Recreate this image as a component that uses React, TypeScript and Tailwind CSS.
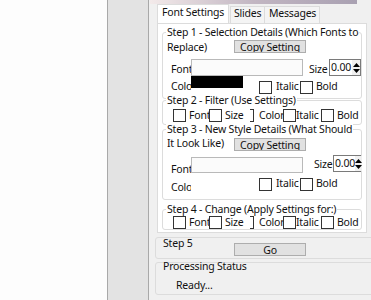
import React from "react";

const Check = () => (
  <span className="block h-[13px] w-[13px] shrink-0 border border-[#333333] bg-white" />
);

const Btn = ({ text, className = "" }: { text: string; className?: string }) => (
  <div
    className={`flex h-[13px] w-[72px] shrink-0 justify-center overflow-hidden border border-[#adadad] bg-[#e1e1e1] leading-[12px] ${className}`}
  >
    {text}
  </div>
);

const Spinner = ({ className = "" }: { className?: string }) => (
  <div className={`flex h-[17px] shrink-0 border border-[#7a7a7a] bg-white ${className}`}>
    <span className="flex-1 pl-[1px] leading-[15px]">0.00</span>
    <span className="flex w-[8px] flex-col items-center justify-center gap-[2px] bg-[#f0f0f0]">
      <svg width="7" height="4" viewBox="0 0 7 4">
        <path d="M0 4L3.5 0L7 4Z" fill="#000" />
      </svg>
      <svg width="7" height="4" viewBox="0 0 7 4">
        <path d="M0 0L3.5 4L7 0Z" fill="#000" />
      </svg>
    </span>
  </div>
);

const Title = ({ children }: { children: React.ReactNode }) => (
  <div className="-mt-[7px] ml-[3px] w-fit whitespace-nowrap bg-white px-[1px] leading-[13px]">
    {children}
  </div>
);

const Lbl = ({ text, className = "" }: { text: string; className?: string }) => (
  <span className={`block shrink-0 overflow-hidden whitespace-nowrap leading-[13px] ${className}`}>
    {text}
  </span>
);

const FilterRow = ({ className = "" }: { className?: string }) => (
  <div className={`flex h-[13px] items-start pl-[10px] ${className}`}>
    <Check />
    <Lbl text="Font" className="w-[23px] pl-[3px]" />
    <Check />
    <Lbl text="Size" className="w-[28px] pl-[3px]" />
    <span className="block h-[13px] w-[4px] shrink-0 border border-l-0 border-[#333333]" />
    <Lbl text="Color" className="w-[29px] pl-[5px]" />
    <Check />
    <Lbl text="Italic" className="w-[25px]" />
    <Check />
    <Lbl text="Bold" className="pl-[3px]" />
  </div>
);

export default function App() {
  return (
    <div className="flex h-[300px] w-[371px] overflow-hidden bg-[#f0f0f0] font-['Noto_Sans',sans-serif] text-[10.5px] tracking-[-0.2px] text-[#111]">
      <div className="w-[107px] shrink-0 bg-[#fdfdfd]" />
      <div className="w-[42px] shrink-0 border-x border-[#a9a9a9] bg-[#e3e3e3]" />

      <div className="flex w-[222px] shrink-0 flex-col">
        <div className="ml-[1px] h-[4px] w-[207px] bg-gradient-to-r from-[#f3eaea] via-[#c2b6c2] to-[#a9a1b2]" />

        {/* tabs */}
        <div className="ml-[8px] flex h-[19px] items-end">
          <div className="h-[19px] w-[72px] border border-b-0 border-[#dcdcdc] bg-white pl-[4px] pt-[1px] leading-[13px]">
            Font Settings
          </div>
          <div className="ml-[1px] h-[17px] w-[35px] border border-b-0 border-[#dcdcdc] bg-[#f4f4f4] pl-[3px] leading-[13px]">
            Slides
          </div>
          <div className="h-[17px] w-[55px] border border-b-0 border-l-0 border-[#dcdcdc] bg-[#f4f4f4] pl-[4px] leading-[13px]">
            Messages
          </div>
        </div>

        {/* tab page */}
        <div className="ml-[8px] flex h-[210px] w-[210px] flex-col overflow-hidden border border-[#dcdcdc] bg-white px-[4px]">
          {/* step 1 */}
          <div className="mt-[8px] rounded-[3px] border border-[#dcdcdc] pb-[4px]">
            <Title>Step 1 - Selection Details (Which Fonts to</Title>
            <div className="flex h-[14px] items-start">
              <Lbl text="Replace)" className="ml-[4px] w-[67px] pt-[2px]" />
              <Btn text="Copy Setting" className="mt-[1px]" />
            </div>
            <div className="mt-[6px] flex h-[17px] items-start">
              <Lbl text="Font" className="ml-[8px] mt-[4px] w-[20px]" />
              <div className="h-[17px] w-[112px] shrink-0 border border-[#b9b9b9] bg-[#fbfbfb]" />
              <Lbl text="Size" className="ml-[6px] mt-[4px] w-[20px]" />
              <Spinner className="w-[32px]" />
            </div>
            <div className="flex h-[18px] items-start">
              <Lbl text="Color" className="ml-[8px] mt-[4px] w-[20px]" />
              <div className="h-[12px] w-[52px] shrink-0 bg-black" />
              <span className="ml-[16px] mt-[5px]">
                <Check />
              </span>
              <Lbl text="Italic" className="mt-[4px] w-[28px] pl-[4px]" />
              <span className="mt-[5px]">
                <Check />
              </span>
              <Lbl text="Bold" className="mt-[4px] pl-[3px]" />
            </div>
          </div>

          {/* step 2 */}
          <div className="mt-[1px] rounded-[3px] border border-[#dcdcdc] pb-[2px]">
            <Title>Step 2 - Filter (Use Settings)</Title>
            <FilterRow className="mt-[2px]" />
          </div>

          {/* step 3 */}
          <div className="mt-[4px] rounded-[3px] border border-[#dcdcdc] pb-[8px]">
            <Title>Step 3 - New Style Details (What Should</Title>
            <div className="flex h-[15px] items-start">
              <Lbl text="It Look Like)" className="ml-[4px] w-[67px] pt-[1px]" />
              <Btn text="Copy Setting" className="mt-[2px]" />
            </div>
            <div className="mt-[4px] flex h-[18px] items-start">
              <Lbl text="Font" className="ml-[8px] mt-[8px] w-[20px]" />
              <div className="mt-[2px] h-[16px] w-[112px] shrink-0 border border-[#b9b9b9] bg-[#fbfbfb]" />
              <Lbl text="Size" className="ml-[11px] mt-[3px] w-[19px]" />
              <Spinner className="w-[28px]" />
            </div>
            <div className="flex h-[18px] items-start">
              <Lbl text="Color" className="ml-[8px] mt-[8px] w-[20px]" />
              <span className="ml-[68px] mt-[5px]">
                <Check />
              </span>
              <Lbl text="Italic" className="mt-[4px] w-[28px] pl-[4px]" />
              <span className="mt-[5px]">
                <Check />
              </span>
              <Lbl text="Bold" className="mt-[4px] pl-[3px]" />
            </div>
          </div>

          {/* step 4 */}
          <div className="mt-[9px] rounded-[3px] border border-[#dcdcdc]">
            <Title>Step 4 - Change (Apply Settings for:)</Title>
            <FilterRow />
          </div>
        </div>

        {/* step 5 */}
        <div className="ml-[6px] mt-[4px] flex h-[22px] w-[230px] shrink-0 items-start rounded-[3px] border border-[#dcdcdc]">
          <Lbl text="Step 5" className="-mt-[1px] ml-[7px] w-[71px]" />
          <Btn text="Go" className="mt-[5px] leading-[13px]" />
        </div>

        {/* processing status */}
        <div className="ml-[6px] mt-[3px] h-[33px] w-[230px] shrink-0 rounded-[3px] border border-[#dcdcdc]">
          <Lbl text="Processing Status" className="-mt-[3px] ml-[7px]" />
          <Lbl text="Ready..." className="ml-[20px] mt-[6px]" />
        </div>
      </div>
    </div>
  );
}
